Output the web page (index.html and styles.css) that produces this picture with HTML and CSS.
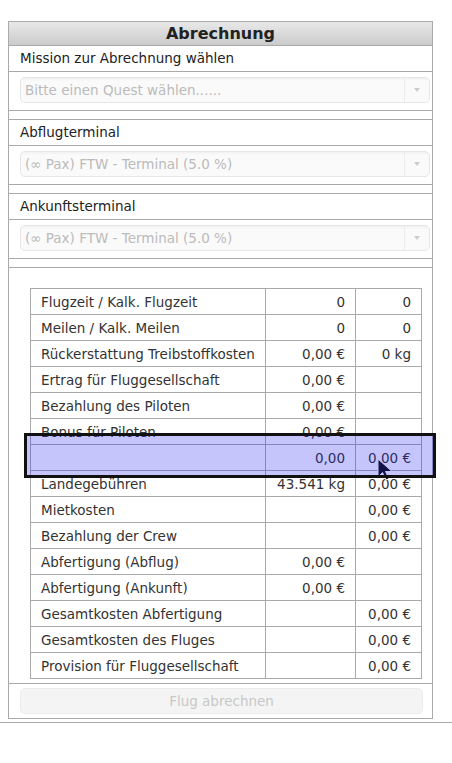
FILE: index.html
```html
<!DOCTYPE html>
<html lang="de">
<head>
    <meta charset="UTF-8">
    <meta name="viewport" content="width=device-width, initial-scale=1.0">
    <title>Abrechnung</title>
    <link rel="stylesheet" href="styles.css">
</head>
<body>
    <div class="page">
        <div class="panel">
            <div class="panel-head">Abrechnung</div>

            <div class="row label">Mission zur Abrechnung wählen</div>
            <div class="row field">
                <div class="select">
                    <span class="select-text">Bitte einen Quest wählen......</span>
                    <span class="select-arrow"></span>
                </div>
            </div>
            <div class="row spacer"></div>

            <div class="row label">Abflugterminal</div>
            <div class="row field">
                <div class="select">
                    <span class="select-text">(∞ Pax) FTW - Terminal (5.0 %)</span>
                    <span class="select-arrow"></span>
                </div>
            </div>
            <div class="row spacer"></div>

            <div class="row label">Ankunftsterminal</div>
            <div class="row field">
                <div class="select">
                    <span class="select-text">(∞ Pax) FTW - Terminal (5.0 %)</span>
                    <span class="select-arrow"></span>
                </div>
            </div>
            <div class="row spacer"></div>

            <div class="row table-area">
                <table class="costs">
                    <colgroup>
                        <col class="col-name">
                        <col class="col-a">
                        <col class="col-b">
                    </colgroup>
                    <tr><td>Flugzeit / Kalk. Flugzeit</td><td class="num">0</td><td class="num">0</td></tr>
                    <tr><td>Meilen / Kalk. Meilen</td><td class="num">0</td><td class="num">0</td></tr>
                    <tr><td>Rückerstattung Treibstoffkosten</td><td class="num">0,00 €</td><td class="num">0 kg</td></tr>
                    <tr><td>Ertrag für Fluggesellschaft</td><td class="num">0,00 €</td><td class="num"></td></tr>
                    <tr><td>Bezahlung des Piloten</td><td class="num">0,00 €</td><td class="num"></td></tr>
                    <tr><td>Bonus für Piloten</td><td class="num">0,00 €</td><td class="num"></td></tr>
                    <tr><td></td><td class="num">0,00</td><td class="num">0,00 €</td></tr>
                    <tr><td>Landegebühren</td><td class="num">43.541 kg</td><td class="num">0,00 €</td></tr>
                    <tr><td>Mietkosten</td><td class="num"></td><td class="num">0,00 €</td></tr>
                    <tr><td>Bezahlung der Crew</td><td class="num"></td><td class="num">0,00 €</td></tr>
                    <tr><td>Abfertigung (Abflug)</td><td class="num">0,00 €</td><td class="num"></td></tr>
                    <tr><td>Abfertigung (Ankunft)</td><td class="num">0,00 €</td><td class="num"></td></tr>
                    <tr><td>Gesamtkosten Abfertigung</td><td class="num"></td><td class="num">0,00 €</td></tr>
                    <tr><td>Gesamtkosten des Fluges</td><td class="num"></td><td class="num">0,00 €</td></tr>
                    <tr><td>Provision für Fluggesellschaft</td><td class="num"></td><td class="num">0,00 €</td></tr>
                </table>
            </div>

            <div class="row button-area">
                <button class="btn" disabled>Flug abrechnen</button>
            </div>
        </div>
    </div>

    <!-- mouse pointer, sits under the inspect highlight -->
    <svg class="cursor" width="17" height="23" viewBox="0 0 17 23">
        <path d="M1 1 L1 19 L5.5 14.5 L9 22 L12 20.8 L8.5 13.5 L15 13.5 Z" fill="#111" stroke="#fff" stroke-width="1"/>
    </svg>

    <!-- inspect highlight over the hovered row -->
    <div class="highlight"></div>
</body>
</html>
```

FILE: styles.css
```css
body {
    margin: 0;
    font-family: "DejaVu Sans", Verdana, sans-serif;
    font-size: 13.5px;
    color: #222;
    background: #fff;
}

.page {
    padding: 21px 19px 3px 8px;
    border-bottom: 1px solid #aaa;
}

.panel {
    border: 1px solid #aaa;
    background: #fff;
}

.panel-head {
    height: 23px;
    line-height: 23px;
    text-align: center;
    font-size: 16px;
    font-weight: bold;
    color: #222;
    background: linear-gradient(to bottom, #e8e8e8, #cbcbcb);
    border-bottom: 1px solid #aaa;
}

.row {
    border-bottom: 1px solid #aaa;
}

.row:last-child {
    border-bottom: none;
}

.label {
    height: 25px;
    line-height: 25px;
    padding-left: 11px;
}

/* heights below include the 1px bottom rule */
.field {
    height: 39px;
    box-sizing: border-box;
    padding: 5px 2px 0 11px;
}

.spacer {
    height: 8px;
}

/* disabled chosen-like select */
.select {
    display: flex;
    height: 26px;
    box-sizing: border-box;
    border: 1px solid #e6e6e6;
    border-radius: 5px;
    background: linear-gradient(to bottom, #f1f1f1 0, #fafafa 3px, #fafafa 100%);
    color: #bbb;
    overflow: hidden;
}

.select-text {
    flex: 1;
    padding-left: 4px;
    line-height: 24px;
    white-space: nowrap;
}

.select-arrow {
    width: 24px;
    border-left: 1px solid #ececec;
    position: relative;
}

.select-arrow::after {
    content: "";
    position: absolute;
    left: 9px;
    top: 10px;
    border-left: 3px solid transparent;
    border-right: 3px solid transparent;
    border-top: 4px solid #ccc;
}

.table-area {
    height: 416px;
    box-sizing: border-box;
    padding: 20px 11px 0 21px;
}

.costs {
    width: 392px;
    border-collapse: collapse;
    table-layout: fixed;
    color: #333;
}

.col-name { width: 235px; }
.col-a { width: 90px; }
.col-b { width: 66px; }

.costs td {
    height: 26px;
    padding: 0 10px;
    border: 1px solid #aaa;
    white-space: nowrap;
    box-sizing: border-box;
}

.costs td.num {
    text-align: right;
}

.button-area {
    height: 34px;
    box-sizing: border-box;
    padding: 4px 9px 0 11px;
}

.btn {
    display: block;
    width: 100%;
    height: 26px;
    font-family: inherit;
    font-size: 13.5px;
    color: #c8c8c8;
    background: #f4f4f4;
    border: 1px solid #ececec;
    border-radius: 5px;
}

.cursor {
    position: absolute;
    left: 377px;
    top: 458px;
}

.highlight {
    position: absolute;
    left: 24px;
    top: 433px;
    width: 412px;
    height: 45px;
    box-sizing: border-box;
    border: 3px solid #111;
    background: rgba(23, 23, 239, 0.25);
}
```
